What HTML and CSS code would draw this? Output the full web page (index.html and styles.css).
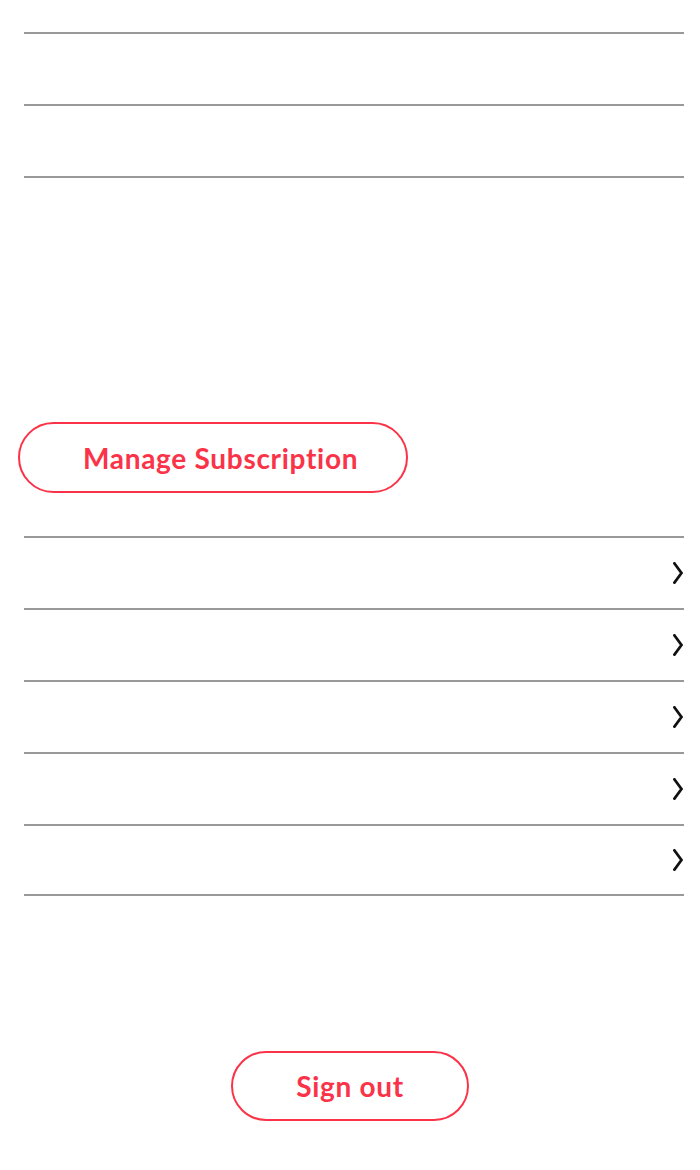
FILE: index.html
```html
<!DOCTYPE html>
<html lang="en">
<head>
<meta charset="utf-8">
<title>Account</title>
<link rel="stylesheet" href="styles.css">
</head>
<body>
<div class="page">
  <div class="list list-top">
    <div class="row"></div>
    <div class="row"></div>
  </div>

  <div class="manage-wrap">
    <button class="pill pill-manage">Manage Subscription</button>
  </div>

  <div class="list list-nav">
    <div class="row nav-row"><svg class="chev" viewBox="0 0 10 22" width="10" height="22"><polyline points="1.5,1.5 8.5,11 1.5,20.5"/></svg></div>
    <div class="row nav-row"><svg class="chev" viewBox="0 0 10 22" width="10" height="22"><polyline points="1.5,1.5 8.5,11 1.5,20.5"/></svg></div>
    <div class="row nav-row"><svg class="chev" viewBox="0 0 10 22" width="10" height="22"><polyline points="1.5,1.5 8.5,11 1.5,20.5"/></svg></div>
    <div class="row nav-row"><svg class="chev" viewBox="0 0 10 22" width="10" height="22"><polyline points="1.5,1.5 8.5,11 1.5,20.5"/></svg></div>
    <div class="row nav-row last"><svg class="chev" viewBox="0 0 10 22" width="10" height="22"><polyline points="1.5,1.5 8.5,11 1.5,20.5"/></svg></div>
  </div>

  <div class="signout-wrap">
    <button class="pill pill-signout">Sign out</button>
  </div>
</div>
</body>
</html>
```
FILE: styles.css
```css
* { box-sizing: border-box; }

html, body {
  margin: 0;
  padding: 0;
  background: #ffffff;
}

body {
  font-family: Lato, "Noto Sans", "Liberation Sans", sans-serif;
  width: 700px;
  height: 1170px;
  overflow: hidden;
}

.page {
  display: flex;
  flex-direction: column;
  padding-top: 32px;
}

.list {
  margin: 0 16px 0 24px;
  border-bottom: 2px solid #999999;
}

.row {
  height: 72px;
  border-top: 2px solid #999999;
}

.nav-row {
  display: flex;
  align-items: center;
  justify-content: flex-end;
  padding-right: 1px;
}

.nav-row.last {
  height: 70px;
}

.chev {
  display: block;
  fill: none;
  stroke: #111111;
  stroke-width: 2.8;
  stroke-linecap: square;
  stroke-linejoin: miter;
}

.manage-wrap {
  display: flex;
  padding: 244px 0 0 18px;
  margin-bottom: 43px;
}

.pill {
  font-family: Lato, "Noto Sans", "Liberation Sans", sans-serif;
  font-weight: 700;
  font-size: 28px;
  letter-spacing: 0.7px;
  font-variant-ligatures: none;
  font-feature-settings: "liga" 0, "clig" 0;
  color: #fa3348;
  background: #ffffff;
  border: 2px solid #fa3348;
  border-radius: 40px;
  padding: 0;
  cursor: pointer;
  display: flex;
  align-items: center;
}

.pill-manage {
  width: 390px;
  height: 71px;
  padding-left: 63px;
  justify-content: flex-start;
}

.signout-wrap {
  display: flex;
  justify-content: center;
  padding-top: 155px;
}

.pill-signout {
  width: 238px;
  height: 70px;
  justify-content: center;
}
```
